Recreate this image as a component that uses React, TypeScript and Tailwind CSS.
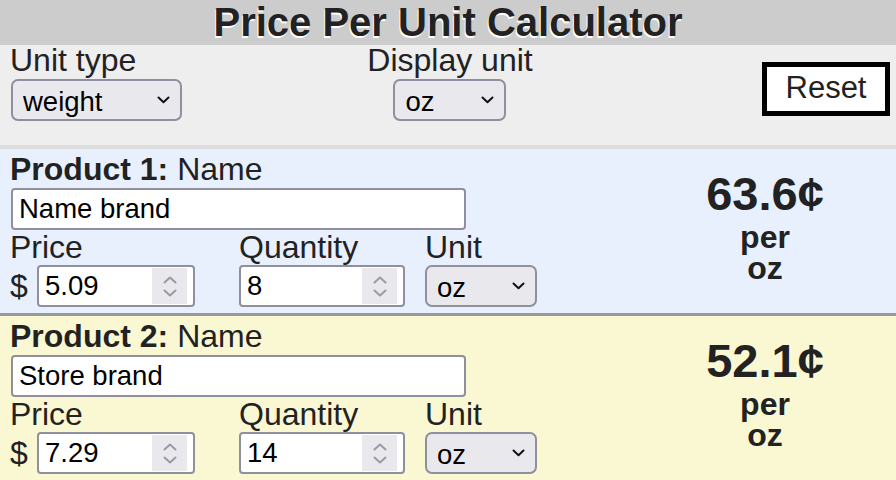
import React from 'react';

const Chevron = () => (
  <svg width="13" height="8" viewBox="0 0 13 8" className="pointer-events-none absolute right-[12px] top-1/2 -translate-y-1/2">
    <path d="M1.5 1.5 L6.5 6.2 L11.5 1.5" fill="none" stroke="#111" strokeWidth="2" strokeLinecap="round" strokeLinejoin="round" />
  </svg>
);

const SelectBox = ({ value, width }: { value: string; width: string }) => (
  <div className={`relative h-[42px] ${width}`}>
    <select
      defaultValue={value}
      className="h-full w-full appearance-none rounded-[7px] border-2 border-[#8f8f9d] bg-[#e9e9ed] pl-[10px] text-[27.5px] text-black outline-none"
    >
      <option>{value}</option>
    </select>
    <Chevron />
  </div>
);

const Spinner = () => (
  <div className="flex h-[36px] w-[35px] shrink-0 flex-col items-center justify-center gap-[5px] bg-[#e9e9ed]">
    <svg width="14" height="8" viewBox="0 0 14 8">
      <path d="M1.5 6.5 L7 1.5 L12.5 6.5" fill="none" stroke="#9a9aa2" strokeWidth="2" strokeLinecap="round" strokeLinejoin="round" />
    </svg>
    <svg width="14" height="8" viewBox="0 0 14 8">
      <path d="M1.5 1.5 L7 6.5 L12.5 1.5" fill="none" stroke="#9a9aa2" strokeWidth="2" strokeLinecap="round" strokeLinejoin="round" />
    </svg>
  </div>
);

const NumberBox = ({ value, width }: { value: string; width: string }) => (
  <div className={`flex h-[42px] ${width} items-center rounded-[4px] border-2 border-[#8f8f9d] bg-white pl-[6px] pr-[6px]`}>
    <input defaultValue={value} className="min-w-0 flex-1 bg-transparent text-[27.5px] text-black outline-none" />
    <Spinner />
  </div>
);

interface Product {
  n: number;
  name: string;
  price: string;
  qty: string;
  result: string;
  bg: string;
}

const products: Product[] = [
  { n: 1, name: 'Name brand', price: '5.09', qty: '8', result: '63.6¢', bg: 'bg-[#e8f0fe]' },
  { n: 2, name: 'Store brand', price: '7.29', qty: '14', result: '52.1¢', bg: 'bg-[#faf7d3]' },
];

const ProductRow = ({ p }: { p: Product }) => (
  <div className={`flex border-b-[3px] border-[#999999] ${p.bg} pl-[10px] pr-[6px] pt-[2px] pb-[6px]`}>
    <div className="w-[630px] shrink-0">
      <div className="text-[32px] leading-[37px]">
        <span className="font-bold">Product {p.n}:</span> Name
      </div>
      <input
        defaultValue={p.name}
        className="ml-px h-[42px] w-[455px] rounded-[4px] border-2 border-[#8f8f9d] bg-white px-[6px] text-[27.5px] text-black outline-none"
      />
      <div className="flex">
        <div className="w-[229px]">
          <div className="text-[32px] leading-[35px]">Price</div>
          <div className="flex items-center">
            <span className="w-[27px] text-[32px] leading-none">$</span>
            <NumberBox value={p.price} width="w-[158px]" />
          </div>
        </div>
        <div className="w-[186px]">
          <div className="text-[32px] leading-[35px]">Quantity</div>
          <NumberBox value={p.qty} width="w-[166px]" />
        </div>
        <div>
          <div className="text-[32px] leading-[35px]">Unit</div>
          <SelectBox value="oz" width="w-[112px]" />
        </div>
      </div>
    </div>
    <div className="flex flex-1 flex-col items-center pt-[20px] text-center font-bold">
      <div className="text-[47px] leading-[46px]">{p.result}</div>
      <div className="mt-[5px] w-[70px] text-[32px] leading-[31px]">per oz</div>
    </div>
  </div>
);

export default function App() {
  return (
    <div className="h-[480px] w-[896px] overflow-hidden bg-white font-['Liberation_Sans',Arial,sans-serif] text-[#222222]">
      <div className="h-[45px] bg-[#cccccc] text-center text-[40px] font-bold leading-[45px] [text-shadow:-1px_2px_0_#ffffff]">
        Price Per Unit Calculator
      </div>
      <div className="grid grid-cols-3 border-b-4 border-[#dddddd] bg-[#eeeeee] pl-[10px] pr-[6px] pb-[24px]">
        <div className="flex flex-col items-start">
          <div className="text-[32px] leading-[30px]">Unit type</div>
          <div className="ml-px mt-[4px]">
            <SelectBox value="weight" width="w-[171px]" />
          </div>
        </div>
        <div className="flex flex-col items-center">
          <div className="text-[32px] leading-[30px]">Display unit</div>
          <div className="mt-[4px]">
            <SelectBox value="oz" width="w-[113px]" />
          </div>
        </div>
        <div className="flex items-start justify-end">
          <button className="mt-[17px] h-[54px] w-[128px] border-[5px] border-black bg-white pb-[4px] text-[31px] leading-none text-[#222222]">
            Reset
          </button>
        </div>
      </div>
      {products.map((p) => (
        <ProductRow key={p.n} p={p} />
      ))}
    </div>
  );
}
